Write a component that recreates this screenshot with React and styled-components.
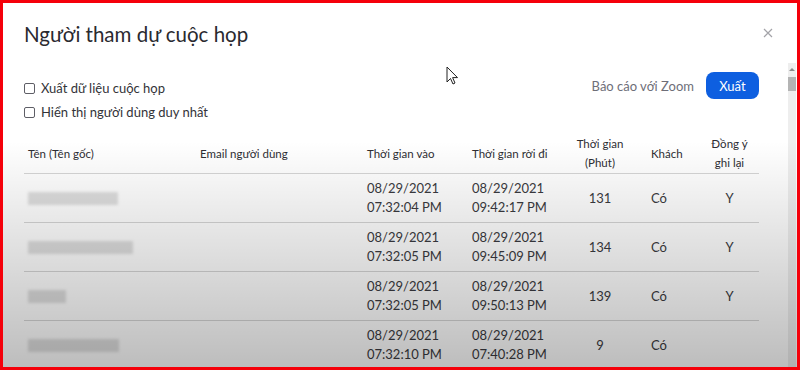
import React from 'react';
import styled, { createGlobalStyle } from 'styled-components';

const GlobalStyle = createGlobalStyle`
  html, body {
    margin: 0;
    padding: 0;
    background: #fff;
  }
  body {
    font-family: 'Lato', 'Noto Sans', sans-serif;
    color: #2e2e33;
  }
`;

const Frame = styled.div`
  position: relative;
  width: 800px;
  height: 370px;
  box-sizing: border-box;
  border: 3px solid #f5000a;
  background: #fff;
  overflow: hidden;
  display: flex;
  flex-direction: column;
`;

const Shade = styled.div`
  position: absolute;
  inset: 0;
  pointer-events: none;
  background: linear-gradient(
    to bottom,
    rgba(0, 0, 0, 0) 0%,
    rgba(0, 0, 0, 0) 38%,
    rgba(0, 0, 0, 0.26) 100%
  );
`;

const Header = styled.div`
  display: flex;
  justify-content: space-between;
  align-items: flex-start;
  box-sizing: border-box;
  height: 60px;
  padding: 19px 24px 0 21px;
`;

const Title = styled.h1`
  margin: 0;
  font-size: 20.5px;
  font-weight: 400;
  color: #2a2a30;
`;

const Close = styled.button`
  margin-top: 6px;
  padding: 0;
  border: 0;
  background: none;
  width: 10px;
  height: 10px;
  display: flex;
`;

const Body = styled.div`
  flex: 1;
  display: flex;
  min-height: 0;
`;

const Main = styled.div`
  flex: 1;
  padding: 9px 29px 0 21px;
  overflow: hidden;
`;

const Scrollbar = styled.div`
  width: 8px;
  margin-right: 1px;
  background: #eeeeee;
  display: flex;
  flex-direction: column;
  align-items: center;
`;

const ScrollArrow = styled.div`
  margin-top: 5px;
  width: 0;
  height: 0;
  border-left: 3px solid transparent;
  border-right: 3px solid transparent;
  border-bottom: 3px solid #8a8a8a;
`;

const ScrollThumb = styled.div`
  margin-top: 6px;
  width: 8px;
  height: 14px;
  background: #b4b4b4;
`;

const Toolbar = styled.div`
  display: flex;
  justify-content: space-between;
  align-items: flex-start;
`;

const Options = styled.div`
  padding-top: 4px;
  display: flex;
  flex-direction: column;
`;

const Option = styled.label`
  display: flex;
  align-items: center;
  gap: 6px;
  height: 24px;
  font-size: 13px;
  color: #333338;
`;

const Box = styled.span`
  width: 9px;
  height: 9px;
  border: 1px solid #5e5e66;
  border-radius: 2px;
  background: #fff;
`;

const Actions = styled.div`
  display: flex;
  align-items: center;
  gap: 12px;
`;

const LinkText = styled.span`
  font-size: 13px;
  color: #6e6e78;
`;

const Primary = styled.button`
  width: 53px;
  height: 27px;
  border: 0;
  border-radius: 8px;
  background: #0e5fe0;
  color: #fff;
  font-family: 'Lato', sans-serif;
  font-size: 13px;
  padding: 0;
`;

const Table = styled.table`
  margin-top: 9px;
  width: 735px;
  border-collapse: collapse;
  table-layout: fixed;
`;

const Th = styled.th`
  height: 40px;
  padding: 0 0 0 ${p => p.$pl || 0}px;
  font-size: 11.5px;
  font-weight: 400;
  line-height: 19px;
  color: #2e2e33;
  text-align: ${p => p.$align || 'left'};
  vertical-align: middle;
  border-bottom: 1px solid #d6d6d6;
`;

const Td = styled.td`
  height: 48px;
  padding: 0 0 0 ${p => p.$pl || 0}px;
  font-size: 13px;
  line-height: 19px;
  color: #3a3a40;
  text-align: ${p => p.$align || 'left'};
  vertical-align: middle;
  border-bottom: 1px solid #d6d6d6;
`;

const Blur = styled.span`
  display: block;
  height: 13px;
  background: #dedede;
  filter: blur(1.5px);
`;

const Cursor = styled.svg`
  position: absolute;
  left: 441px;
  top: 61px;
`;

const columns = [
  { w: 172, pl: 4 },
  { w: 167, pl: 4 },
  { w: 105, pl: 4 },
  { w: 100, pl: 4 },
  { w: 64, align: 'center' },
  { w: 68, pl: 19 },
  { w: 59, align: 'center' },
];

const rows = [
  { name: 90, inn: ['08/29/2021', '07:32:04 PM'], out: ['08/29/2021', '09:42:17 PM'], min: 131, guest: 'Có', ok: 'Y' },
  { name: 105, inn: ['08/29/2021', '07:32:05 PM'], out: ['08/29/2021', '09:45:09 PM'], min: 134, guest: 'Có', ok: 'Y' },
  { name: 38, inn: ['08/29/2021', '07:32:05 PM'], out: ['08/29/2021', '09:50:13 PM'], min: 139, guest: 'Có', ok: 'Y' },
  { name: 91, inn: ['08/29/2021', '07:32:10 PM'], out: ['08/29/2021', '07:40:28 PM'], min: 9, guest: 'Có', ok: '' },
];

function Lines({ items }) {
  return items.map((t, i) => (
    <React.Fragment key={i}>
      {i > 0 && <br />}
      {t}
    </React.Fragment>
  ));
}

export default function App() {
  return (
    <>
      <GlobalStyle />
      <Frame>
        <Header>
          <Title>Người tham dự cuộc họp</Title>
          <Close aria-label="Đóng">
            <svg width="10" height="10" viewBox="0 0 10 10">
              <path d="M1 1 L9 9 M9 1 L1 9" stroke="#a3a3a8" strokeWidth="1.2" fill="none" />
            </svg>
          </Close>
        </Header>
        <Body>
          <Main>
            <Toolbar>
              <Options>
                <Option><Box />Xuất dữ liệu cuộc họp</Option>
                <Option><Box />Hiển thị người dùng duy nhất</Option>
              </Options>
              <Actions>
                <LinkText>Báo cáo với Zoom</LinkText>
                <Primary>Xuất</Primary>
              </Actions>
            </Toolbar>
            <Table>
              <colgroup>
                {columns.map((c, i) => <col key={i} style={{ width: c.w }} />)}
              </colgroup>
              <thead>
                <tr>
                  <Th $pl={4}>Tên (Tên gốc)</Th>
                  <Th $pl={4}>Email người dùng</Th>
                  <Th $pl={4}>Thời gian vào</Th>
                  <Th $pl={4}>Thời gian rời đi</Th>
                  <Th $align="center">Thời gian<br />(Phút)</Th>
                  <Th $pl={19}>Khách</Th>
                  <Th $align="center">Đồng ý<br />ghi lại</Th>
                </tr>
              </thead>
              <tbody>
                {rows.map((r, i) => (
                  <tr key={i}>
                    <Td $pl={4}><Blur style={{ width: r.name }} /></Td>
                    <Td $pl={4} />
                    <Td $pl={4}><Lines items={r.inn} /></Td>
                    <Td $pl={4}><Lines items={r.out} /></Td>
                    <Td $align="center">{r.min}</Td>
                    <Td $pl={19}>{r.guest}</Td>
                    <Td $align="center">{r.ok}</Td>
                  </tr>
                ))}
              </tbody>
            </Table>
          </Main>
          <Scrollbar>
            <ScrollArrow />
            <ScrollThumb />
          </Scrollbar>
        </Body>
        <Cursor width="16" height="22" viewBox="0 0 16 22">
          <path d="M3 3 L3 18 L6.5 14.5 L9 20 L11 19 L8.6 13.6 L13.5 13.6 Z" fill="#fff" stroke="#222" strokeWidth="1" strokeLinejoin="round" />
        </Cursor>
        <Shade />
      </Frame>
    </>
  );
}
